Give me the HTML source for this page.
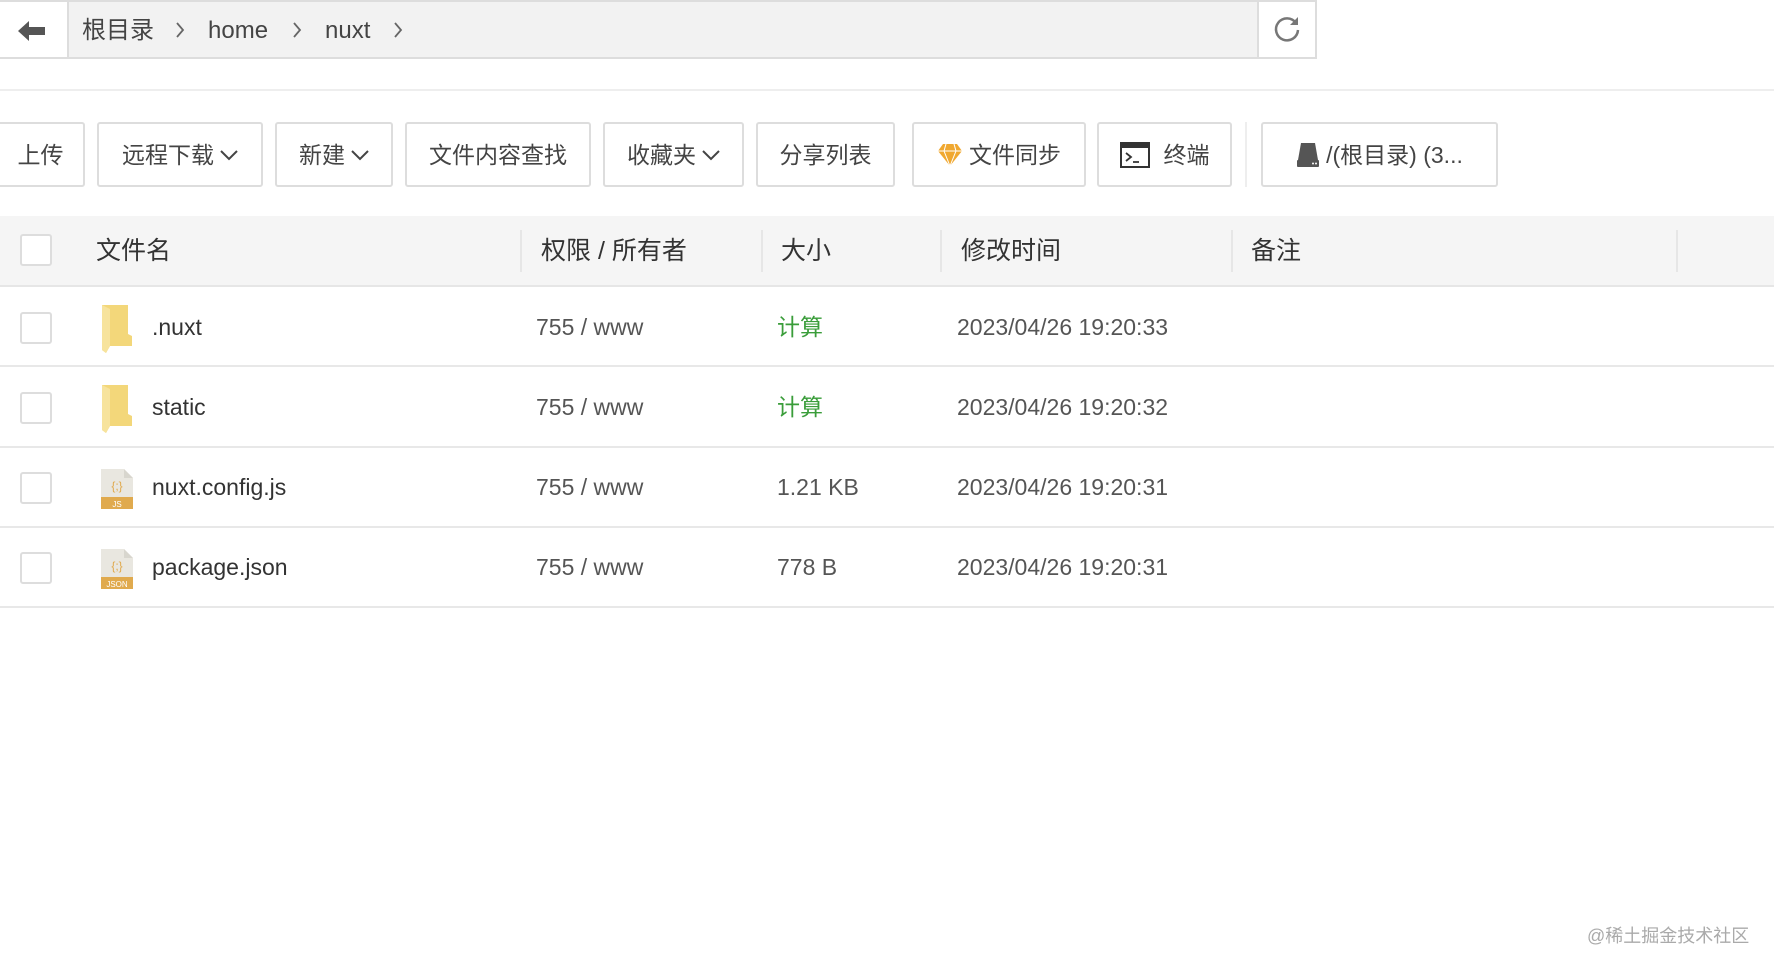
<!DOCTYPE html>
<html><head><meta charset="utf-8"><style>
*{box-sizing:border-box;margin:0;padding:0}
body{width:1774px;height:968px;background:#fff;font-family:"Liberation Sans","Noto Sans CJK SC",sans-serif;color:#333;position:relative;overflow:hidden}
.abs{position:absolute}
.crumb{left:0;top:0;width:1317px;height:59px;border:2px solid #ddd;background:#f2f2f2}
.back{left:0;top:0;width:69px;height:59px;background:#fff;border-right:2px solid #ddd;border-bottom:2px solid #ddd;border-top:2px solid #ddd}
.ref{left:1257px;top:0;width:60px;height:59px;background:#fff;border:2px solid #ddd}
.ct{top:0;height:61px;line-height:61px;font-size:24px;color:#444}
.sep{top:21px}
.btn{top:122px;height:65px;border:2px solid #ddd;border-radius:3px;background:#fff;font-size:23px;color:#444;display:flex;align-items:center;justify-content:center;gap:6px;line-height:30px}
.hdr{left:0;top:216px;width:1774px;height:71px;background:#f5f5f5;border-bottom:2px solid #e6e6e6}
.cb{width:32px;height:32px;border:2px solid #ddd;border-radius:3px;background:#fff}
.ht{top:216px;height:70px;line-height:70px;font-size:25px;color:#333}
.dv{top:230px;width:2px;height:42px;background:#e6e6e6}
.row{left:0;width:1774px;height:80px;border-bottom:2px solid #e8e8e8}
.rt{font-size:23px;color:#555;height:80px;line-height:80px}
.g{color:#3a9d3a}
</style></head><body>
<div class="abs crumb"></div>
<div class="abs back"></div>
<svg class="abs" style="left:18px;top:21px" width="28" height="20" viewBox="0 0 28 20"><path d="M0 10L11 0V6H27V14H11V20Z" fill="#555"/></svg>
<div class="abs ct" style="left:82px">根目录</div>
<svg class="abs sep" style="left:175px" width="10" height="18"><path d="M2 2L8 9L2 16" fill="none" stroke="#666" stroke-width="1.8"/></svg>
<div class="abs ct" style="left:208px">home</div>
<svg class="abs sep" style="left:292px" width="10" height="18"><path d="M2 2L8 9L2 16" fill="none" stroke="#666" stroke-width="1.8"/></svg>
<div class="abs ct" style="left:325px">nuxt</div>
<svg class="abs sep" style="left:393px" width="10" height="18"><path d="M2 2L8 9L2 16" fill="none" stroke="#666" stroke-width="1.8"/></svg>
<div class="abs ref"></div>
<svg class="abs" style="left:1272px;top:14px" width="30" height="30" viewBox="0 0 30 30"><path d="M24 9A11 11 0 1 0 26 16" fill="none" stroke="#777" stroke-width="2.5"/><path d="M26 3V11H18Z" fill="#777"/></svg>
<div class="abs" style="left:0;top:89px;width:1774px;height:2px;background:#eee"></div>

<div class="abs btn" style="left:-4px;width:89px">上传</div>
<div class="abs btn" style="left:97px;width:166px">远程下载<svg width="18" height="12"><path d="M1 2L9 10L17 2" fill="none" stroke="#444" stroke-width="2"/></svg></div>
<div class="abs btn" style="left:275px;width:118px">新建<svg width="18" height="12"><path d="M1 2L9 10L17 2" fill="none" stroke="#444" stroke-width="2"/></svg></div>
<div class="abs btn" style="left:405px;width:186px">文件内容查找</div>
<div class="abs btn" style="left:603px;width:141px">收藏夹<svg width="18" height="12"><path d="M1 2L9 10L17 2" fill="none" stroke="#444" stroke-width="2"/></svg></div>
<div class="abs btn" style="left:756px;width:139px">分享列表</div>
<div class="abs btn" style="left:912px;width:174px"><svg width="26" height="24" viewBox="0 0 26 24"><path d="M6 1H20L25 8L13 23L1 8Z" fill="#f0a830"/><path d="M1 8H25M9 1L7 8L13 23L19 8L17 1" fill="none" stroke="#fff" stroke-width="1"/></svg>文件同步</div>
<div class="abs btn" style="left:1097px;width:135px;gap:14px"><svg width="30" height="26" viewBox="0 0 30 26"><rect x="1" y="1" width="28" height="24" fill="#fff" stroke="#333" stroke-width="2"/><rect x="1" y="1" width="28" height="5" fill="#333"/><path d="M6 11L11 15L6 19M13 20H19" fill="none" stroke="#333" stroke-width="1.8"/></svg>终端</div>
<div class="abs" style="left:1245px;top:122px;width:2px;height:65px;background:#eee"></div>
<div class="abs btn" style="left:1261px;width:237px"><svg width="24" height="26" viewBox="0 0 24 26"><path d="M5 1H19L22 18H2Z" fill="#555"/><rect x="1" y="18" width="22" height="7" rx="1" fill="#555"/><circle cx="17" cy="21.5" r="1" fill="#fff"/><circle cx="20" cy="21.5" r="1" fill="#fff"/></svg>/(根目录) (3...</div>

<div class="abs hdr"></div>
<div class="abs cb" style="left:20px;top:234px"></div>
<div class="abs ht" style="left:96px">文件名</div>
<div class="abs dv" style="left:520px"></div>
<div class="abs ht" style="left:541px">权限 / 所有者</div>
<div class="abs dv" style="left:761px"></div>
<div class="abs ht" style="left:781px">大小</div>
<div class="abs dv" style="left:940px"></div>
<div class="abs ht" style="left:961px">修改时间</div>
<div class="abs dv" style="left:1231px"></div>
<div class="abs ht" style="left:1251px">备注</div>
<div class="abs dv" style="left:1676px"></div>

<div class="abs row" style="top:287px"></div>
<div class="abs row" style="top:368px"></div>
<div class="abs row" style="top:448px"></div>
<div class="abs row" style="top:528px"></div>

<div class="abs cb" style="left:20px;top:312px"></div>
<div class="abs cb" style="left:20px;top:392px"></div>
<div class="abs cb" style="left:20px;top:472px"></div>
<div class="abs cb" style="left:20px;top:552px"></div>

<svg class="abs" style="left:100px;top:304px" width="34" height="50" viewBox="0 0 34 50"><path d="M2 1H28V30L32 32V42H10L6 49L2 46Z" fill="#f3d77a"/><path d="M2 1L10 5V42L6 49L2 46Z" fill="#f7e39c"/></svg>
<svg class="abs" style="left:100px;top:384px" width="34" height="50" viewBox="0 0 34 50"><path d="M2 1H28V30L32 32V42H10L6 49L2 46Z" fill="#f3d77a"/><path d="M2 1L10 5V42L6 49L2 46Z" fill="#f7e39c"/></svg>
<svg class="abs" style="left:100px;top:468px" width="34" height="42" viewBox="0 0 34 42"><path d="M1 1H24L33 10V41H1Z" fill="#e9e7e0"/><path d="M24 1V10H33" fill="#d8d6ce"/><rect x="1" y="29" width="32" height="12" fill="#e0aa4e"/><text x="17" y="22" font-size="12" fill="#e0aa4e" text-anchor="middle" font-family="Liberation Sans">{;}</text><text x="17" y="39" font-size="8" fill="#fff" text-anchor="middle" font-family="Liberation Sans">JS</text></svg>
<svg class="abs" style="left:100px;top:548px" width="34" height="42" viewBox="0 0 34 42"><path d="M1 1H24L33 10V41H1Z" fill="#e9e7e0"/><path d="M24 1V10H33" fill="#d8d6ce"/><rect x="1" y="29" width="32" height="12" fill="#e0aa4e"/><text x="17" y="22" font-size="12" fill="#e0aa4e" text-anchor="middle" font-family="Liberation Sans">{;}</text><text x="17" y="39" font-size="8" fill="#fff" text-anchor="middle" font-family="Liberation Sans">JSON</text></svg>

<div class="abs rt" style="left:152px;top:287px;color:#333">.nuxt</div>
<div class="abs rt" style="left:536px;top:287px">755 / www</div>
<div class="abs rt g" style="left:777px;top:287px">计算</div>
<div class="abs rt" style="left:957px;top:287px">2023/04/26 19:20:33</div>

<div class="abs rt" style="left:152px;top:367px;color:#333">static</div>
<div class="abs rt" style="left:536px;top:367px">755 / www</div>
<div class="abs rt g" style="left:777px;top:367px">计算</div>
<div class="abs rt" style="left:957px;top:367px">2023/04/26 19:20:32</div>

<div class="abs rt" style="left:152px;top:447px;color:#333">nuxt.config.js</div>
<div class="abs rt" style="left:536px;top:447px">755 / www</div>
<div class="abs rt" style="left:777px;top:447px">1.21 KB</div>
<div class="abs rt" style="left:957px;top:447px">2023/04/26 19:20:31</div>

<div class="abs rt" style="left:152px;top:527px;color:#333">package.json</div>
<div class="abs rt" style="left:536px;top:527px">755 / www</div>
<div class="abs rt" style="left:777px;top:527px">778 B</div>
<div class="abs rt" style="left:957px;top:527px">2023/04/26 19:20:31</div>

<div class="abs" style="left:1587px;top:922px;font-size:18px;color:#aaa">@稀土掘金技术社区</div>
</body></html>
